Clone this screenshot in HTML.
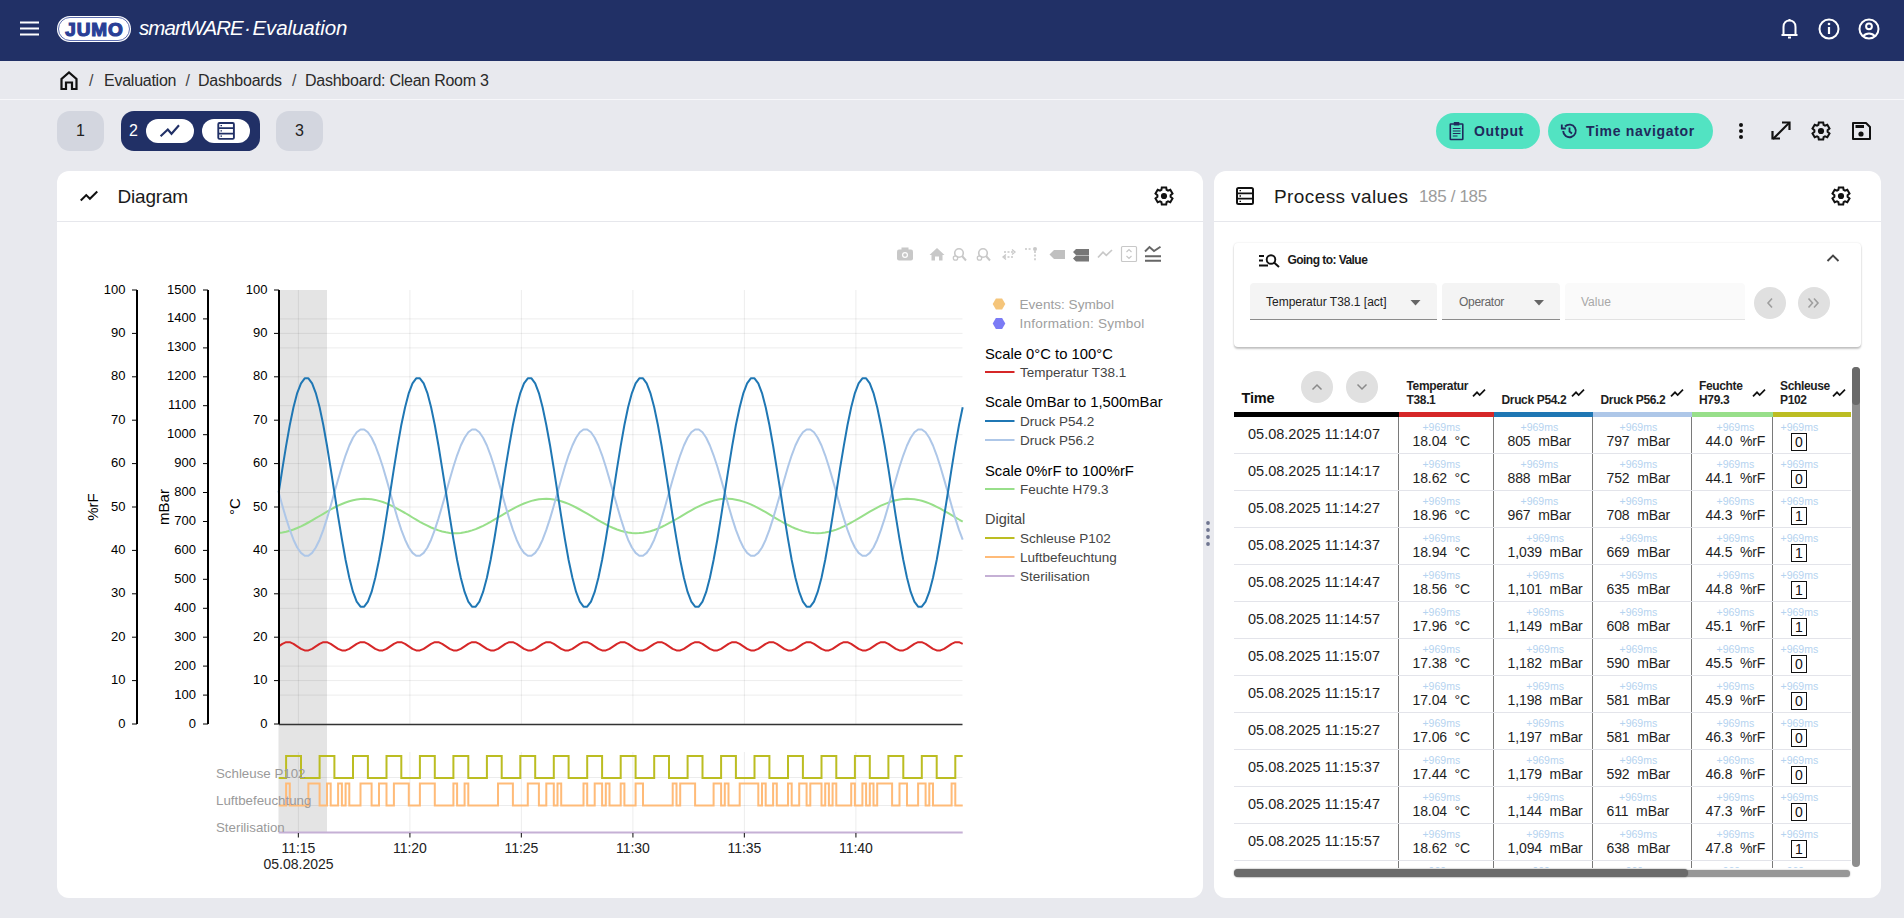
<!DOCTYPE html>
<html><head><meta charset="utf-8"><style>
*{margin:0;padding:0;box-sizing:border-box}
html,body{width:1904px;height:918px;overflow:hidden;background:#e8e9ee;font-family:"Liberation Sans",sans-serif;color:#1a1a1a}
.abs{position:absolute}
.hdr{left:0;top:0;width:1904px;height:61px;background:#213066}
.bc{left:0;top:61px;width:1904px;height:39px;background:#e8e9ee;border-bottom:1.5px solid #f7f7fa}
.crumb{font-size:16px;color:#2a2a2a;letter-spacing:-0.25px;top:72px;white-space:nowrap}
.tab{top:111px;height:40px;border-radius:13px;background:#d3d6df;font-size:16px;color:#222;text-align:center;line-height:40px}
.pill{top:119px;width:48px;height:24px;border-radius:12px;background:#fff}
.btn{top:113px;height:36px;border-radius:18px;background:#52e3c2;color:#1f2a5c;font-weight:bold;font-size:14px;letter-spacing:0.68px;line-height:36px;white-space:nowrap}
.card{background:#fff;border-radius:12px;top:171px;height:727px}
.ctitle{font-size:19px;color:#1a1a1a;top:186px;letter-spacing:-0.2px;white-space:nowrap}
.hline{height:1px;background:#e6e7ec;top:221px}
.tm{font-size:14.5px;color:#1e1e1e;white-space:nowrap;letter-spacing:0px}
.cell{text-align:center;white-space:nowrap}
.ms{font-size:10.5px;color:#b5d3f0;line-height:11px;height:11px}
.val{font-size:14px;color:#1e1e1e;line-height:17px;margin-top:0.8px;letter-spacing:-0.1px}
.box{display:inline-block;border:1.3px solid #111;width:16px;height:18px;font-size:14px;line-height:16px;color:#111;margin-top:-1px}
.rowline{left:1234px;width:617px;height:1px;background:#e3e4ea}
.th{font-size:12px;font-weight:bold;color:#1e1e1e;line-height:14px;letter-spacing:-0.35px;white-space:nowrap}
</style></head><body>
<div class="abs hdr"></div>
<div class="abs" style="left:57px;top:16px;width:74px;height:26px;border-radius:13px;background:#fff;"></div>
<div class="abs" style="left:57.8px;top:16.8px;width:72.4px;height:24.4px;border-radius:12.2px;border:1.1px solid rgba(42,63,150,0.75);"></div>
<div class="abs" style="left:57px;top:16px;width:74px;height:26px;text-align:center;line-height:27.5px;font-size:19px;font-weight:bold;color:#2a3f96;letter-spacing:0.9px;text-indent:0.9px;-webkit-text-stroke:1.2px #2a3f96;">JUMO</div>
<div class="abs" style="left:139px;top:14px;font-size:20.5px;font-style:italic;color:#fff;white-space:nowrap;line-height:28px"><span style="letter-spacing:-0.95px">smartWARE</span><span style="position:absolute;left:105px;top:0">·</span><span style="position:absolute;left:113.5px;top:0;letter-spacing:-0.1px">Evaluation</span></div>
<div class="abs bc"></div>
<div class="abs crumb" style="left:89px;color:#444">/</div>
<div class="abs crumb" style="left:104px">Evaluation</div>
<div class="abs crumb" style="left:185.5px;color:#444">/</div>
<div class="abs crumb" style="left:198px">Dashboards</div>
<div class="abs crumb" style="left:292px;color:#444">/</div>
<div class="abs crumb" style="left:305px">Dashboard: Clean Room 3</div>
<div class="abs tab" style="left:57px;width:47px">1</div>
<div class="abs tab" style="left:121px;width:139px;background:#213066;color:#fff;text-align:left;padding-left:8px">2</div>
<div class="abs pill" style="left:146px"></div>
<div class="abs pill" style="left:202px"></div>
<div class="abs tab" style="left:276px;width:47px">3</div>
<div class="abs btn" style="left:1436px;width:104px;padding-left:38px">Output</div>
<div class="abs btn" style="left:1548px;width:165px;padding-left:38px">Time navigator</div>
<div class="abs card" style="left:57px;width:1146px"></div>
<div class="abs card" style="left:1214px;width:667px"></div>
<div class="abs hline" style="left:57px;width:1146px"></div>
<div class="abs hline" style="left:1214px;width:667px"></div>
<div class="abs ctitle" style="left:117.5px">Diagram</div>
<div class="abs ctitle" style="left:1274px;letter-spacing:0.4px">Process values</div>
<div class="abs" style="left:1419px;top:187px;font-size:17px;color:#9c9c9c;white-space:nowrap;letter-spacing:-0.35px">185 / 185</div>
<div class="abs" style="left:1234px;top:243px;width:627px;height:104px;border-radius:4px;background:#fff;box-shadow:0 2px 2px rgba(0,0,0,0.22),0 0 2px rgba(0,0,0,0.12)"></div>
<div class="abs" style="left:1287.5px;top:252.8px;font-size:12px;font-weight:bold;color:#1a1a1a;letter-spacing:-0.55px;white-space:nowrap">Going to: Value</div>
<div class="abs" style="left:1250px;top:283px;width:187px;height:37px;background:#f4f4f4;border-radius:4px 4px 0 0;border-bottom:1px solid #8c8c8c"></div>
<div class="abs" style="left:1266px;top:295px;font-size:12px;color:#222;letter-spacing:0px;white-space:nowrap">Temperatur T38.1 [act]</div>
<div class="abs" style="left:1442px;top:283px;width:118px;height:37px;background:#f4f4f4;border-radius:4px 4px 0 0;border-bottom:1px solid #8c8c8c"></div>
<div class="abs" style="left:1459px;top:295px;font-size:12px;color:#666;letter-spacing:-0.3px;white-space:nowrap">Operator</div>
<div class="abs" style="left:1565px;top:283px;width:180px;height:37px;background:#fafafa;border-radius:4px 4px 0 0;border-bottom:1px solid #e2e2e2"></div>
<div class="abs" style="left:1581px;top:295px;font-size:12px;color:#a8a8a8;white-space:nowrap">Value</div>
<div class="abs" style="left:1241.5px;top:390px;font-size:14.5px;font-weight:bold;color:#111;letter-spacing:-0.2px">Time</div>
<svg class="abs" style="left:0;top:0" width="1904" height="918"><path d="M20 22.5 H39 M20 28.5 H39 M20 34.5 H39" stroke="#fff" stroke-width="2"/><path d="M782.5 0" fill="none"/><path d="M1781.5 35 H1797.5 M1783.5 35 V27 C1783.5 22.5 1786.5 20.5 1789.5 20.5 C1792.5 20.5 1795.5 22.5 1795.5 27 V35" fill="none" stroke="#fff" stroke-width="2"/><path d="M1788 37.5 H1791" stroke="#fff" stroke-width="2"/><path d="M1789.5 19 V21" stroke="#fff" stroke-width="2"/><circle cx="1829" cy="29" r="9.5" fill="none" stroke="#fff" stroke-width="2"/><path d="M1829 27 V34" stroke="#fff" stroke-width="2.2"/><circle cx="1829" cy="24" r="1.3" fill="#fff"/><circle cx="1869" cy="29" r="9.5" fill="none" stroke="#fff" stroke-width="2"/><circle cx="1869" cy="26.3" r="2.9" fill="none" stroke="#fff" stroke-width="2"/><path d="M1863 36.5 C1865 34 1867 33.6 1869 33.6 C1871 33.6 1873 34 1875 36.5" fill="none" stroke="#fff" stroke-width="2"/><path d="M61.5 89 V79 L69 72.5 L76.5 79 V89 H72 V82.5 H66 V89 Z" fill="none" stroke="#111" stroke-width="2.2" stroke-linejoin="miter"/><circle cx="1741" cy="125" r="2" fill="#111"/><circle cx="1741" cy="131" r="2" fill="#111"/><circle cx="1741" cy="137" r="2" fill="#111"/><path d="M1773 139 L1789 123" stroke="#111" stroke-width="2"/><path d="M1782 122.5 H1789.5 V130" fill="none" stroke="#111" stroke-width="2.2"/><path d="M1772.5 131 V138.5 H1780" fill="none" stroke="#111" stroke-width="2.2"/><polygon points="1818.4,124.9 1818.8,122.4 1823.2,122.4 1823.6,124.9 1825,125.7 1827.3,124.8 1829.5,128.6 1827.6,130.2 1827.6,131.8 1829.5,133.4 1827.3,137.2 1825,136.3 1823.6,137.1 1823.2,139.6 1818.8,139.6 1818.4,137.1 1817,136.3 1814.7,137.2 1812.5,133.4 1814.4,131.8 1814.4,130.2 1812.5,128.6 1814.7,124.8 1817,125.7" fill="none" stroke="#111" stroke-width="2" stroke-linejoin="miter"/><circle cx="1821" cy="131" r="3.1" fill="#111"/><path d="M1853 123 H1866 L1870 127 V139 H1853 Z" fill="none" stroke="#111" stroke-width="2" stroke-linejoin="round"/><rect x="1855.5" y="125" width="8.5" height="3" fill="#111"/><circle cx="1861" cy="134" r="2.6" fill="#111"/><polygon points="1161.4,189.9 1161.8,187.4 1166.2,187.4 1166.6,189.9 1168,190.7 1170.3,189.8 1172.5,193.6 1170.6,195.2 1170.6,196.8 1172.5,198.4 1170.3,202.2 1168,201.3 1166.6,202.1 1166.2,204.6 1161.8,204.6 1161.4,202.1 1160,201.3 1157.7,202.2 1155.5,198.4 1157.4,196.8 1157.4,195.2 1155.5,193.6 1157.7,189.8 1160,190.7" fill="none" stroke="#111" stroke-width="2" stroke-linejoin="miter"/><circle cx="1164" cy="196" r="3.1" fill="#111"/><polygon points="1838.4,189.9 1838.8,187.4 1843.2,187.4 1843.6,189.9 1845,190.7 1847.3,189.8 1849.5,193.6 1847.6,195.2 1847.6,196.8 1849.5,198.4 1847.3,202.2 1845,201.3 1843.6,202.1 1843.2,204.6 1838.8,204.6 1838.4,202.1 1837,201.3 1834.7,202.2 1832.5,198.4 1834.4,196.8 1834.4,195.2 1832.5,193.6 1834.7,189.8 1837,190.7" fill="none" stroke="#111" stroke-width="2" stroke-linejoin="miter"/><circle cx="1841" cy="196" r="3.1" fill="#111"/><circle cx="1208" cy="523" r="1.9" fill="#6f7590"/><circle cx="1208" cy="530" r="1.9" fill="#6f7590"/><circle cx="1208" cy="537" r="1.9" fill="#6f7590"/><circle cx="1208" cy="544" r="1.9" fill="#6f7590"/><path d="M1259 256 H1264 M1259 260.5 H1263 M1259 265.5 H1268" stroke="#111" stroke-width="1.8"/><circle cx="1271" cy="259.5" r="4.3" fill="none" stroke="#111" stroke-width="1.9"/><path d="M1274 262.5 L1279 267" stroke="#111" stroke-width="2"/><path d="M1827.5 261 L1833 255.5 L1838.5 261" fill="none" stroke="#444" stroke-width="1.9"/><path d="M1410.5 300 H1420.5 L1415.5 305.5 Z" fill="#666"/><path d="M1534 300 H1544 L1539 305.5 Z" fill="#666"/><circle cx="1770" cy="303" r="16" fill="#e0e0e0"/><circle cx="1814" cy="303" r="16" fill="#e0e0e0"/><path d="M1772 298.5 L1768 303 L1772 307.5" fill="none" stroke="#9e9e9e" stroke-width="1.6"/><path d="M1808.5 298.5 L1812.5 303 L1808.5 307.5 M1814 298.5 L1818 303 L1814 307.5" fill="none" stroke="#9e9e9e" stroke-width="1.6"/><circle cx="1317" cy="387" r="16" fill="#e0e0e0"/><circle cx="1362" cy="387" r="16" fill="#e0e0e0"/><path d="M1312.5 389.5 L1317 385 L1321.5 389.5" fill="none" stroke="#8a8a8a" stroke-width="1.5"/><path d="M1357.5 384.5 L1362 389 L1366.5 384.5" fill="none" stroke="#8a8a8a" stroke-width="1.5"/><rect x="897" y="249.5" width="16" height="11" rx="2" fill="#c8c8c8"/><rect x="901.5" y="247.5" width="7" height="3" fill="#c8c8c8"/><circle cx="905" cy="255" r="3" fill="#fff"/><circle cx="905" cy="255" r="1.8" fill="#c8c8c8"/><path d="M929.5 255 L937 248 L944.5 255 H942.5 V260.5 H939 V256.5 H935 V260.5 H931.5 V255 Z" fill="#c8c8c8"/><circle cx="959" cy="253" r="4.3" fill="none" stroke="#c8c8c8" stroke-width="1.6"/><path d="M962 256 L966 260.5" stroke="#c8c8c8" stroke-width="2"/><circle cx="955.5" cy="258" r="2.2" fill="none" stroke="#c8c8c8" stroke-width="1.3"/><circle cx="983" cy="253" r="4.3" fill="none" stroke="#c8c8c8" stroke-width="1.6"/><path d="M986 256 L990 260.5" stroke="#c8c8c8" stroke-width="2"/><circle cx="979.5" cy="258" r="2.2" fill="none" stroke="#c8c8c8" stroke-width="1.3"/><path d="M1004 252 H1014 M1004 257 H1014" stroke="#c8c8c8" stroke-width="1.4" stroke-dasharray="2 1.5"/><path d="M1012 249.5 L1015 252 L1012 254.5 M1006 254.5 L1003 257 L1006 259.5" fill="none" stroke="#c8c8c8" stroke-width="1.3"/><path d="M1025 249 H1031 M1035 251 V261" stroke="#c8c8c8" stroke-width="1.6" stroke-dasharray="2 1.6"/><circle cx="1035" cy="249" r="2" fill="#c8c8c8"/><path d="M1049.5 254.5 L1054 250 H1065 V259 H1054 Z" fill="#c0c0c0"/><path d="M1073 252 L1076 249 H1089 V255 H1076 Z M1073 258.5 L1076 255.5 H1089 V261.5 H1076 Z" fill="#777"/><path d="M1098 257.5 L1103 252.2 L1106.3 255.3 L1112 250" fill="none" stroke="#c8c8c8" stroke-width="1.7"/><rect x="1121.5" y="246.5" width="15" height="15" rx="1" fill="none" stroke="#c8c8c8" stroke-width="1.2"/><path d="M1126.5 252 L1129 249.5 L1131.5 252 M1126.5 256 L1129 258.5 L1131.5 256" fill="none" stroke="#c8c8c8" stroke-width="1.2"/><path d="M1145 251.5 L1149.5 247 L1154 251 L1160.5 246.8" fill="none" stroke="#666" stroke-width="1.9"/><path d="M1145 256.3 H1161 M1145 260.8 H1161" stroke="#666" stroke-width="1.9"/></svg>
<svg class="abs" style="left:146px;top:119px" width="48" height="24"><path d="M14.6 17.3 L21.8 10.6 L25.5 14.8 L33 6.3" fill="none" stroke="#213066" stroke-width="2.1"/></svg>
<svg class="abs" style="left:202px;top:119px" width="48" height="24"><rect x="16.3" y="4" width="15.6" height="15.9" rx="1.2" fill="none" stroke="#213066" stroke-width="1.9"/><path d="M16.3 9.1 H31.9 M16.3 14.6 H31.9" stroke="#213066" stroke-width="1.7"/><path d="M18.5 6.6 H20 M18.5 11.9 H20 M18.5 17.2 H20" stroke="#213066" stroke-width="1.3"/></svg>
<svg class="abs" style="left:1449px;top:121px" width="16" height="20" viewBox="0 0 16 20"><rect x="1.3" y="3" width="12.5" height="15.5" rx="0.5" fill="none" stroke="#1f2a5c" stroke-width="1.6"/><rect x="4.8" y="1" width="5.5" height="3.5" fill="#1f2a5c"/><path d="M3.8 7.5 H11.5 M3.8 10 H11.5 M3.8 12.5 H11.5 M3.8 15 H8.5" stroke="#1f2a5c" stroke-width="1.1"/></svg>
<svg class="abs" style="left:1560px;top:122px" width="18" height="18" viewBox="0 0 18 18"><path d="M3.2 9 A6.3 6.3 0 1 0 5 4.5" fill="none" stroke="#1f2a5c" stroke-width="1.9"/><path d="M1.8 2.5 V6.5 H5.8" fill="none" stroke="#1f2a5c" stroke-width="1.8"/><path d="M9.5 5.5 V9.5 L12 11.5" fill="none" stroke="#1f2a5c" stroke-width="1.8"/></svg>
<svg class="abs" style="left:78px;top:185px" width="22" height="22" viewBox="0 0 24 24"><path d="M3 17 L9 11 L13 15 L21 7" fill="none" stroke="#111" stroke-width="2.2" stroke-linecap="butt" stroke-linejoin="miter"/></svg><svg class="abs" style="left:1236px;top:187px" width="18" height="18" viewBox="0 0 18 18"><rect x="1" y="1" width="16" height="16" rx="1.5" fill="none" stroke="#111" stroke-width="2"/><path d="M1 6.3 H17 M1 11.7 H17" stroke="#111" stroke-width="1.8"/><path d="M3.5 3.6 H5 M3.5 9 H5 M3.5 14.4 H5" stroke="#111" stroke-width="1.4"/></svg><svg class="abs" style="left:0;top:0" width="1904" height="918" font-family='"Liberation Sans", sans-serif'><rect x="278.5" y="290" width="48.5" height="543" fill="#e4e4e4"/><path d="M280 318.9 H962.5 M280 333.4 H962.5 M280 347.9 H962.5 M280 376.8 H962.5 M280 405.7 H962.5 M280 420.2 H962.5 M280 434.7 H962.5 M280 463.6 H962.5 M280 492.5 H962.5 M280 507 H962.5 M280 521.5 H962.5 M280 550.4 H962.5 M280 579.3 H962.5 M280 593.8 H962.5 M280 608.3 H962.5 M280 637.2 H962.5 M280 666.1 H962.5 M280 680.6 H962.5 M280 695.1 H962.5 M298.4 290 V724 M298.4 752 V833 M409.9 290 V724 M409.9 752 V833 M521.4 290 V724 M521.4 752 V833 M632.9 290 V724 M632.9 752 V833 M744.4 290 V724 M744.4 752 V833 M855.9 290 V724 M855.9 752 V833 M280 777.5 H962.5 M280 805.5 H962.5" stroke="rgba(0,0,0,0.075)" stroke-width="1" fill="none"/><polyline points="278.7,646.3 282.4,643.8 286.1,642.2 289.8,642.2 293.5,643.8 297.2,646.3 301,648.8 304.7,650.4 308.4,650.4 312.1,648.8 315.8,646.3 319.6,643.8 323.3,642.2 327,642.2 330.7,643.8 334.4,646.3 338.1,648.8 341.9,650.4 345.6,650.4 349.3,648.8 353,646.3 356.7,643.8 360.5,642.2 364.2,642.2 367.9,643.8 371.6,646.3 375.3,648.8 379,650.4 382.8,650.4 386.5,648.8 390.2,646.3 393.9,643.8 397.6,642.2 401.3,642.2 405.1,643.8 408.8,646.3 412.5,648.8 416.2,650.4 419.9,650.4 423.7,648.8 427.4,646.3 431.1,643.8 434.8,642.2 438.5,642.2 442.2,643.8 446,646.3 449.7,648.8 453.4,650.4 457.1,650.4 460.8,648.8 464.6,646.3 468.3,643.8 472,642.2 475.7,642.2 479.4,643.8 483.1,646.3 486.9,648.8 490.6,650.4 494.3,650.4 498,648.8 501.7,646.3 505.4,643.8 509.2,642.2 512.9,642.2 516.6,643.8 520.3,646.3 524,648.8 527.8,650.4 531.5,650.4 535.2,648.8 538.9,646.3 542.6,643.8 546.3,642.2 550.1,642.2 553.8,643.8 557.5,646.3 561.2,648.8 564.9,650.4 568.6,650.4 572.4,648.8 576.1,646.3 579.8,643.8 583.5,642.2 587.2,642.2 591,643.8 594.7,646.3 598.4,648.8 602.1,650.4 605.8,650.4 609.5,648.8 613.3,646.3 617,643.8 620.7,642.2 624.4,642.2 628.1,643.8 631.9,646.3 635.6,648.8 639.3,650.4 643,650.4 646.7,648.8 650.4,646.3 654.2,643.8 657.9,642.2 661.6,642.2 665.3,643.8 669,646.3 672.7,648.8 676.5,650.4 680.2,650.4 683.9,648.8 687.6,646.3 691.3,643.8 695.1,642.2 698.8,642.2 702.5,643.8 706.2,646.3 709.9,648.8 713.6,650.4 717.4,650.4 721.1,648.8 724.8,646.3 728.5,643.8 732.2,642.2 735.9,642.2 739.7,643.8 743.4,646.3 747.1,648.8 750.8,650.4 754.5,650.4 758.3,648.8 762,646.3 765.7,643.8 769.4,642.2 773.1,642.2 776.8,643.8 780.6,646.3 784.3,648.8 788,650.4 791.7,650.4 795.4,648.8 799.2,646.3 802.9,643.8 806.6,642.2 810.3,642.2 814,643.8 817.7,646.3 821.5,648.8 825.2,650.4 828.9,650.4 832.6,648.8 836.3,646.3 840,643.8 843.8,642.2 847.5,642.2 851.2,643.8 854.9,646.3 858.6,648.8 862.4,650.4 866.1,650.4 869.8,648.8 873.5,646.3 877.2,643.8 880.9,642.2 884.7,642.2 888.4,643.8 892.1,646.3 895.8,648.8 899.5,650.4 903.3,650.4 907,648.8 910.7,646.3 914.4,643.8 918.1,642.2 921.8,642.2 925.6,643.8 929.3,646.3 933,648.8 936.7,650.4 940.4,650.4 944.1,648.8 947.9,646.3 951.6,643.8 955.3,642.2 959,642.2 962.7,643.8" fill="none" stroke="#d62728" stroke-width="2" stroke-linejoin="round"/><polyline points="278.7,533 282.4,532.5 286.1,531.8 289.8,530.8 293.5,529.5 297.2,528 301,526.3 304.7,524.5 308.4,522.5 312.1,520.4 315.8,518.2 319.6,516 323.3,513.8 327,511.6 330.7,509.5 334.4,507.5 338.1,505.7 341.9,504 345.6,502.5 349.3,501.2 353,500.2 356.7,499.5 360.5,499 364.2,498.8 367.9,498.9 371.6,499.3 375.3,499.9 379,500.9 382.8,502 386.5,503.4 390.2,505.1 393.9,506.9 397.6,508.8 401.3,510.9 405.1,513 408.8,515.2 412.5,517.5 416.2,519.7 419.9,521.8 423.7,523.8 427.4,525.7 431.1,527.5 434.8,529 438.5,530.4 442.2,531.5 446,532.3 449.7,532.9 453.4,533.2 457.1,533.2 460.8,532.9 464.6,532.3 468.3,531.5 472,530.4 475.7,529.1 479.4,527.5 483.1,525.8 486.9,523.9 490.6,521.8 494.3,519.7 498,517.5 501.7,515.3 505.4,513.1 509.2,510.9 512.9,508.9 516.6,506.9 520.3,505.1 524,503.5 527.8,502.1 531.5,500.9 535.2,500 538.9,499.3 542.6,498.9 546.3,498.8 550.1,499 553.8,499.5 557.5,500.2 561.2,501.2 564.9,502.5 568.6,503.9 572.4,505.6 576.1,507.5 579.8,509.5 583.5,511.6 587.2,513.7 591,515.9 594.7,518.2 598.4,520.3 602.1,522.4 605.8,524.4 609.5,526.3 613.3,528 617,529.5 620.7,530.7 624.4,531.8 628.1,532.5 631.9,533 635.6,533.2 639.3,533.1 643,532.7 646.7,532.1 650.4,531.2 654.2,530 657.9,528.6 661.6,527 665.3,525.2 669,523.2 672.7,521.2 676.5,519 680.2,516.8 683.9,514.6 687.6,512.4 691.3,510.3 695.1,508.2 698.8,506.3 702.5,504.6 706.2,503 709.9,501.7 713.6,500.6 717.4,499.7 721.1,499.1 724.8,498.8 728.5,498.8 732.2,499.1 735.9,499.7 739.7,500.5 743.4,501.6 747.1,502.9 750.8,504.4 754.5,506.2 758.3,508.1 762,510.1 765.7,512.2 769.4,514.4 773.1,516.6 776.8,518.8 780.6,521 784.3,523.1 788,525 791.7,526.9 795.4,528.5 799.2,529.9 802.9,531.1 806.6,532 810.3,532.7 814,533.1 817.7,533.2 821.5,533 825.2,532.6 828.9,531.8 832.6,530.8 836.3,529.6 840,528.1 843.8,526.4 847.5,524.6 851.2,522.6 854.9,520.5 858.6,518.3 862.4,516.1 866.1,513.9 869.8,511.7 873.5,509.6 877.2,507.6 880.9,505.7 884.7,504.1 888.4,502.6 892.1,501.3 895.8,500.3 899.5,499.5 903.3,499 907,498.8 910.7,498.9 914.4,499.2 918.1,499.9 921.8,500.8 925.6,502 929.3,503.4 933,505 936.7,506.8 940.4,508.7 944.1,510.8 947.9,512.9 951.6,515.1 955.3,517.3 959,519.5 962.7,521.7" fill="none" stroke="#98df8a" stroke-width="2" stroke-linejoin="round"/><polyline points="278.7,492.6 282.4,505.8 286.1,518.4 289.8,529.9 293.5,539.7 297.2,547.5 301,552.9 304.7,555.7 308.4,555.7 312.1,552.9 315.8,547.5 319.6,539.7 323.3,529.9 327,518.4 330.7,505.8 334.4,492.6 338.1,479.4 341.9,466.8 345.6,455.3 349.3,445.5 353,437.7 356.7,432.3 360.5,429.5 364.2,429.5 367.9,432.3 371.6,437.7 375.3,445.5 379,455.3 382.8,466.8 386.5,479.4 390.2,492.6 393.9,505.8 397.6,518.4 401.3,529.9 405.1,539.7 408.8,547.5 412.5,552.9 416.2,555.7 419.9,555.7 423.7,552.9 427.4,547.5 431.1,539.7 434.8,529.9 438.5,518.4 442.2,505.8 446,492.6 449.7,479.4 453.4,466.8 457.1,455.3 460.8,445.5 464.6,437.7 468.3,432.3 472,429.5 475.7,429.5 479.4,432.3 483.1,437.7 486.9,445.5 490.6,455.3 494.3,466.8 498,479.4 501.7,492.6 505.4,505.8 509.2,518.4 512.9,529.9 516.6,539.7 520.3,547.5 524,552.9 527.8,555.7 531.5,555.7 535.2,552.9 538.9,547.5 542.6,539.7 546.3,529.9 550.1,518.4 553.8,505.8 557.5,492.6 561.2,479.4 564.9,466.8 568.6,455.3 572.4,445.5 576.1,437.7 579.8,432.3 583.5,429.5 587.2,429.5 591,432.3 594.7,437.7 598.4,445.5 602.1,455.3 605.8,466.8 609.5,479.4 613.3,492.6 617,505.8 620.7,518.4 624.4,529.9 628.1,539.7 631.9,547.5 635.6,552.9 639.3,555.7 643,555.7 646.7,552.9 650.4,547.5 654.2,539.7 657.9,529.9 661.6,518.4 665.3,505.8 669,492.6 672.7,479.4 676.5,466.8 680.2,455.3 683.9,445.5 687.6,437.7 691.3,432.3 695.1,429.5 698.8,429.5 702.5,432.3 706.2,437.7 709.9,445.5 713.6,455.3 717.4,466.8 721.1,479.4 724.8,492.6 728.5,505.8 732.2,518.4 735.9,529.9 739.7,539.7 743.4,547.5 747.1,552.9 750.8,555.7 754.5,555.7 758.3,552.9 762,547.5 765.7,539.7 769.4,529.9 773.1,518.4 776.8,505.8 780.6,492.6 784.3,479.4 788,466.8 791.7,455.3 795.4,445.5 799.2,437.7 802.9,432.3 806.6,429.5 810.3,429.5 814,432.3 817.7,437.7 821.5,445.5 825.2,455.3 828.9,466.8 832.6,479.4 836.3,492.6 840,505.8 843.8,518.4 847.5,529.9 851.2,539.7 854.9,547.5 858.6,552.9 862.4,555.7 866.1,555.7 869.8,552.9 873.5,547.5 877.2,539.7 880.9,529.9 884.7,518.4 888.4,505.8 892.1,492.6 895.8,479.4 899.5,466.8 903.3,455.3 907,445.5 910.7,437.7 914.4,432.3 918.1,429.5 921.8,429.5 925.6,432.3 929.3,437.7 933,445.5 936.7,455.3 940.4,466.8 944.1,479.4 947.9,492.6 951.6,505.8 955.3,518.4 959,529.9 962.7,539.7" fill="none" stroke="#aec7e8" stroke-width="2" stroke-linejoin="round"/><polyline points="278.7,492.5 282.4,468.6 286.1,445.8 289.8,425 293.5,407.2 297.2,393.1 301,383.3 304.7,378.3 308.4,378.3 312.1,383.3 315.8,393.1 319.6,407.2 323.3,425 327,445.8 330.7,468.6 334.4,492.5 338.1,516.4 341.9,539.2 345.6,560 349.3,577.8 353,591.9 356.7,601.7 360.5,606.7 364.2,606.7 367.9,601.7 371.6,591.9 375.3,577.8 379,560 382.8,539.2 386.5,516.4 390.2,492.5 393.9,468.6 397.6,445.8 401.3,425 405.1,407.2 408.8,393.1 412.5,383.3 416.2,378.3 419.9,378.3 423.7,383.3 427.4,393.1 431.1,407.2 434.8,425 438.5,445.8 442.2,468.6 446,492.5 449.7,516.4 453.4,539.2 457.1,560 460.8,577.8 464.6,591.9 468.3,601.7 472,606.7 475.7,606.7 479.4,601.7 483.1,591.9 486.9,577.8 490.6,560 494.3,539.2 498,516.4 501.7,492.5 505.4,468.6 509.2,445.8 512.9,425 516.6,407.2 520.3,393.1 524,383.3 527.8,378.3 531.5,378.3 535.2,383.3 538.9,393.1 542.6,407.2 546.3,425 550.1,445.8 553.8,468.6 557.5,492.5 561.2,516.4 564.9,539.2 568.6,560 572.4,577.8 576.1,591.9 579.8,601.7 583.5,606.7 587.2,606.7 591,601.7 594.7,591.9 598.4,577.8 602.1,560 605.8,539.2 609.5,516.4 613.3,492.5 617,468.6 620.7,445.8 624.4,425 628.1,407.2 631.9,393.1 635.6,383.3 639.3,378.3 643,378.3 646.7,383.3 650.4,393.1 654.2,407.2 657.9,425 661.6,445.8 665.3,468.6 669,492.5 672.7,516.4 676.5,539.2 680.2,560 683.9,577.8 687.6,591.9 691.3,601.7 695.1,606.7 698.8,606.7 702.5,601.7 706.2,591.9 709.9,577.8 713.6,560 717.4,539.2 721.1,516.4 724.8,492.5 728.5,468.6 732.2,445.8 735.9,425 739.7,407.2 743.4,393.1 747.1,383.3 750.8,378.3 754.5,378.3 758.3,383.3 762,393.1 765.7,407.2 769.4,425 773.1,445.8 776.8,468.6 780.6,492.5 784.3,516.4 788,539.2 791.7,560 795.4,577.8 799.2,591.9 802.9,601.7 806.6,606.7 810.3,606.7 814,601.7 817.7,591.9 821.5,577.8 825.2,560 828.9,539.2 832.6,516.4 836.3,492.5 840,468.6 843.8,445.8 847.5,425 851.2,407.2 854.9,393.1 858.6,383.3 862.4,378.3 866.1,378.3 869.8,383.3 873.5,393.1 877.2,407.2 880.9,425 884.7,445.8 888.4,468.6 892.1,492.5 895.8,516.4 899.5,539.2 903.3,560 907,577.8 910.7,591.9 914.4,601.7 918.1,606.7 921.8,606.7 925.6,601.7 929.3,591.9 933,577.8 936.7,560 940.4,539.2 944.1,516.4 947.9,492.5 951.6,468.6 955.3,445.8 959,425 962.7,407.2" fill="none" stroke="#1f77b4" stroke-width="2" stroke-linejoin="round"/><path d="M278.7 778H286.1V756H301V778H319.6V756H334.4V778H353V756H367.9V778H386.5V756H401.3V778H419.9V756H434.8V778H453.4V756H468.3V778H486.9V756H501.7V778H520.3V756H535.2V778H553.8V756H568.6V778H587.2V756H602.1V778H620.7V756H635.6V778H654.2V756H669V778H687.6V756H702.5V778H721.1V756H735.9V778H754.5V756H769.4V778H788V756H802.9V778H821.5V756H836.3V778H854.9V756H869.8V778H888.4V756H903.3V778H921.8V756H936.7V778H955.3V756H962.7" fill="none" stroke="#bcbd22" stroke-width="2"/><path d="M278.7 805.5H286.1V783.5H289.8V805.5H308.4V783.5H319.6V805.5H327V783.5H330.7V805.5H338.1V783.5H341.9V805.5H345.6V783.5H349.3V805.5H360.5V783.5H371.6V805.5H379V783.5H386.5V805.5H393.9V783.5H408.8V805.5H419.9V783.5H434.8V805.5H453.4V783.5H457.1V805.5H464.6V783.5H468.3V805.5H498V783.5H512.9V805.5H527.8V783.5H538.9V805.5H546.3V783.5H553.8V805.5H557.5V783.5H561.2V805.5H583.5V783.5H587.2V805.5H594.7V783.5H602.1V805.5H605.8V783.5H609.5V805.5H620.7V783.5H624.4V805.5H635.6V783.5H643V805.5H672.7V783.5H676.5V805.5H680.2V783.5H695.1V805.5H713.6V783.5H721.1V805.5H724.8V783.5H728.5V805.5H739.7V783.5H758.3V805.5H762V783.5H765.7V805.5H773.1V783.5H776.8V805.5H788V783.5H791.7V805.5H799.2V783.5H806.6V805.5H810.3V783.5H821.5V805.5H825.2V783.5H828.9V805.5H832.6V783.5H836.3V805.5H851.2V783.5H854.9V805.5H862.4V783.5H866.1V805.5H869.8V783.5H873.5V805.5H877.2V783.5H892.1V805.5H899.5V783.5H907V805.5H918.1V783.5H925.6V805.5H929.3V783.5H933V805.5H951.6V783.5H955.3V805.5H962.7" fill="none" stroke="#ffbb78" stroke-width="2"/><path d="M278.66 832.5 H962.7" stroke="#c5b0d5" stroke-width="2"/><path d="M137 290 V724" stroke="#000" stroke-width="2"/><path d="M208 290 V724" stroke="#000" stroke-width="2"/><path d="M279 290 V724" stroke="#000" stroke-width="2"/><path d="M132 724 H137 M274 724 H279 M132 680.6 H137 M274 680.6 H279 M132 637.2 H137 M274 637.2 H279 M132 593.8 H137 M274 593.8 H279 M132 550.4 H137 M274 550.4 H279 M132 507 H137 M274 507 H279 M132 463.6 H137 M274 463.6 H279 M132 420.2 H137 M274 420.2 H279 M132 376.8 H137 M274 376.8 H279 M132 333.4 H137 M274 333.4 H279 M132 290 H137 M274 290 H279 M203 724 H208 M203 695.1 H208 M203 666.1 H208 M203 637.2 H208 M203 608.3 H208 M203 579.3 H208 M203 550.4 H208 M203 521.5 H208 M203 492.5 H208 M203 463.6 H208 M203 434.7 H208 M203 405.7 H208 M203 376.8 H208 M203 347.9 H208 M203 318.9 H208 M203 290 H208" stroke="#000" stroke-width="1"/><path d="M279 724.5 H962.5" stroke="#333" stroke-width="1.3"/><path d="M298.4 833 V837.5 M409.9 833 V837.5 M521.4 833 V837.5 M632.9 833 V837.5 M744.4 833 V837.5 M855.9 833 V837.5" stroke="#333" stroke-width="1.2"/><g font-size="13" fill="#000"><text x="125.5" y="727.5" text-anchor="end">0</text><text x="267.5" y="727.5" text-anchor="end">0</text><text x="125.5" y="684.1" text-anchor="end">10</text><text x="267.5" y="684.1" text-anchor="end">10</text><text x="125.5" y="640.7" text-anchor="end">20</text><text x="267.5" y="640.7" text-anchor="end">20</text><text x="125.5" y="597.3" text-anchor="end">30</text><text x="267.5" y="597.3" text-anchor="end">30</text><text x="125.5" y="553.9" text-anchor="end">40</text><text x="267.5" y="553.9" text-anchor="end">40</text><text x="125.5" y="510.5" text-anchor="end">50</text><text x="267.5" y="510.5" text-anchor="end">50</text><text x="125.5" y="467.1" text-anchor="end">60</text><text x="267.5" y="467.1" text-anchor="end">60</text><text x="125.5" y="423.7" text-anchor="end">70</text><text x="267.5" y="423.7" text-anchor="end">70</text><text x="125.5" y="380.3" text-anchor="end">80</text><text x="267.5" y="380.3" text-anchor="end">80</text><text x="125.5" y="336.9" text-anchor="end">90</text><text x="267.5" y="336.9" text-anchor="end">90</text><text x="125.5" y="293.5" text-anchor="end">100</text><text x="267.5" y="293.5" text-anchor="end">100</text><text x="196" y="727.5" text-anchor="end">0</text><text x="196" y="698.6" text-anchor="end">100</text><text x="196" y="669.6" text-anchor="end">200</text><text x="196" y="640.7" text-anchor="end">300</text><text x="196" y="611.8" text-anchor="end">400</text><text x="196" y="582.8" text-anchor="end">500</text><text x="196" y="553.9" text-anchor="end">600</text><text x="196" y="525" text-anchor="end">700</text><text x="196" y="496" text-anchor="end">800</text><text x="196" y="467.1" text-anchor="end">900</text><text x="196" y="438.2" text-anchor="end">1000</text><text x="196" y="409.2" text-anchor="end">1100</text><text x="196" y="380.3" text-anchor="end">1200</text><text x="196" y="351.4" text-anchor="end">1300</text><text x="196" y="322.4" text-anchor="end">1400</text><text x="196" y="293.5" text-anchor="end">1500</text></g><g font-size="15" fill="#000" text-anchor="middle"><text transform="translate(98 507) rotate(-90)">%rF</text><text transform="translate(169 507) rotate(-90)">mBar</text><text transform="translate(240 506.5) rotate(-90)">°C</text></g><g font-size="14" fill="#222" text-anchor="middle"><text x="298.4" y="852.5">11:15</text><text x="409.9" y="852.5">11:20</text><text x="521.4" y="852.5">11:25</text><text x="632.9" y="852.5">11:30</text><text x="744.4" y="852.5">11:35</text><text x="855.9" y="852.5">11:40</text><text x="298.6" y="868.5">05.08.2025</text></g><g font-size="13.3" fill="#9a9a9a"><text x="216" y="777.5">Schleuse P102</text><text x="216" y="804.5">Luftbefeuchtung</text><text x="216" y="831.5">Sterilisation</text></g><polygon points="1005.3,304 1002.1,309.5 995.9,309.5 992.7,304 995.9,298.5 1002.1,298.5" fill="#f5c57a"/><polygon points="1005.3,323.5 1002.1,329 995.9,329 992.7,323.5 995.9,318 1002.1,318" fill="#7b7bf5"/><g font-size="13.6" fill="#a0a0a0"><text x="1019.5" y="309">Events: Symbol</text><text x="1019.5" y="327.8" letter-spacing="0.22">Information: Symbol</text></g><g font-size="14.8" fill="#000"><text x="985" y="358.5">Scale 0°C to 100°C</text><text x="985" y="407.4">Scale 0mBar to 1,500mBar</text><text x="985" y="475.6">Scale 0%rF to 100%rF</text></g><text x="985" y="524" font-size="14.5" fill="#444">Digital</text><path d="M985 372 H1014.5" stroke="#d62728" stroke-width="2"/><text x="1020" y="377" font-size="13.5" fill="#444">Temperatur T38.1</text><path d="M985 421 H1014.5" stroke="#1f77b4" stroke-width="2"/><text x="1020" y="426" font-size="13.5" fill="#444">Druck P54.2</text><path d="M985 440 H1014.5" stroke="#aec7e8" stroke-width="2"/><text x="1020" y="445" font-size="13.5" fill="#444">Druck P56.2</text><path d="M985 489 H1014.5" stroke="#98df8a" stroke-width="2"/><text x="1020" y="494" font-size="13.5" fill="#444">Feuchte H79.3</text><path d="M985 538 H1014.5" stroke="#bcbd22" stroke-width="2"/><text x="1020" y="543" font-size="13.5" fill="#444">Schleuse P102</text><path d="M985 557 H1014.5" stroke="#ffbb78" stroke-width="2"/><text x="1020" y="562" font-size="13.5" fill="#444">Luftbefeuchtung</text><path d="M985 576 H1014.5" stroke="#c5b0d5" stroke-width="2"/><text x="1020" y="581" font-size="13.5" fill="#444">Sterilisation</text></svg><div class="abs" style="left:1234px;top:367px;width:617px;height:501px;overflow:hidden"><div style="position:absolute;left:-1234px;top:-367px;width:1904px;height:918px"><div class="abs" style="left:1234px;top:412px;width:164.5px;height:5px;background:#000"></div><div class="abs" style="left:1398.5px;top:412px;width:95px;height:5px;background:#d62728"></div><div class="abs" style="left:1493.5px;top:412px;width:99px;height:5px;background:#1f77b4"></div><div class="abs" style="left:1592.5px;top:412px;width:99px;height:5px;background:#aec7e8"></div><div class="abs" style="left:1691.5px;top:412px;width:81px;height:5px;background:#98df8a"></div><div class="abs" style="left:1772.5px;top:412px;width:78.5px;height:5px;background:#bcbd22"></div><div class="abs" style="left:1398px;top:417px;width:1px;height:451px;background:#7a7a7a"></div><div class="abs" style="left:1493px;top:417px;width:1px;height:451px;background:#7a7a7a"></div><div class="abs" style="left:1592px;top:417px;width:1px;height:451px;background:#7a7a7a"></div><div class="abs" style="left:1691px;top:417px;width:1px;height:451px;background:#7a7a7a"></div><div class="abs" style="left:1772px;top:417px;width:1px;height:451px;background:#7a7a7a"></div><div class="abs th" style="left:1406.5px;top:379px">Temperatur<br>T38.1</div><svg class="abs" style="left:1470.5px;top:384.5px" width="16" height="16" viewBox="0 0 24 24"><path d="M3 17 L9 11 L13 15 L21 7" fill="none" stroke="#111" stroke-width="2.6" stroke-linecap="butt" stroke-linejoin="miter"/></svg><div class="abs th" style="left:1501.5px;top:379px"><br>Druck P54.2</div><svg class="abs" style="left:1569.5px;top:384.5px" width="16" height="16" viewBox="0 0 24 24"><path d="M3 17 L9 11 L13 15 L21 7" fill="none" stroke="#111" stroke-width="2.6" stroke-linecap="butt" stroke-linejoin="miter"/></svg><div class="abs th" style="left:1600.5px;top:379px"><br>Druck P56.2</div><svg class="abs" style="left:1668.5px;top:384.5px" width="16" height="16" viewBox="0 0 24 24"><path d="M3 17 L9 11 L13 15 L21 7" fill="none" stroke="#111" stroke-width="2.6" stroke-linecap="butt" stroke-linejoin="miter"/></svg><div class="abs th" style="left:1699px;top:379px">Feuchte<br>H79.3</div><svg class="abs" style="left:1750.5px;top:384.5px" width="16" height="16" viewBox="0 0 24 24"><path d="M3 17 L9 11 L13 15 L21 7" fill="none" stroke="#111" stroke-width="2.6" stroke-linecap="butt" stroke-linejoin="miter"/></svg><div class="abs th" style="left:1780px;top:379px">Schleuse<br>P102</div><svg class="abs" style="left:1831.0px;top:384.5px" width="16" height="16" viewBox="0 0 24 24"><path d="M3 17 L9 11 L13 15 L21 7" fill="none" stroke="#111" stroke-width="2.6" stroke-linecap="butt" stroke-linejoin="miter"/></svg><div class="abs tm" style="left:1248px;top:426px">05.08.2025 11:14:07</div><div class="abs cell" style="left:1412.5px;top:421.5px"><div class="ms">+969ms</div><div class="val">18.04&nbsp; °C</div></div><div class="abs cell" style="left:1507.5px;top:421.5px"><div class="ms">+969ms</div><div class="val">805&nbsp; mBar</div></div><div class="abs cell" style="left:1606.5px;top:421.5px"><div class="ms">+969ms</div><div class="val">797&nbsp; mBar</div></div><div class="abs cell" style="left:1705.5px;top:421.5px"><div class="ms">+969ms</div><div class="val">44.0&nbsp; %rF</div></div><div class="abs cell" style="left:1780.5px;top:421.5px;width:37px"><div class="ms">+969ms</div><div class="box">0</div></div><div class="abs rowline" style="top:453px"></div><div class="abs tm" style="left:1248px;top:463px">05.08.2025 11:14:17</div><div class="abs cell" style="left:1412.5px;top:458.5px"><div class="ms">+969ms</div><div class="val">18.62&nbsp; °C</div></div><div class="abs cell" style="left:1507.5px;top:458.5px"><div class="ms">+969ms</div><div class="val">888&nbsp; mBar</div></div><div class="abs cell" style="left:1606.5px;top:458.5px"><div class="ms">+969ms</div><div class="val">752&nbsp; mBar</div></div><div class="abs cell" style="left:1705.5px;top:458.5px"><div class="ms">+969ms</div><div class="val">44.1&nbsp; %rF</div></div><div class="abs cell" style="left:1780.5px;top:458.5px;width:37px"><div class="ms">+969ms</div><div class="box">0</div></div><div class="abs rowline" style="top:490px"></div><div class="abs tm" style="left:1248px;top:500px">05.08.2025 11:14:27</div><div class="abs cell" style="left:1412.5px;top:495.5px"><div class="ms">+969ms</div><div class="val">18.96&nbsp; °C</div></div><div class="abs cell" style="left:1507.5px;top:495.5px"><div class="ms">+969ms</div><div class="val">967&nbsp; mBar</div></div><div class="abs cell" style="left:1606.5px;top:495.5px"><div class="ms">+969ms</div><div class="val">708&nbsp; mBar</div></div><div class="abs cell" style="left:1705.5px;top:495.5px"><div class="ms">+969ms</div><div class="val">44.3&nbsp; %rF</div></div><div class="abs cell" style="left:1780.5px;top:495.5px;width:37px"><div class="ms">+969ms</div><div class="box">1</div></div><div class="abs rowline" style="top:527px"></div><div class="abs tm" style="left:1248px;top:537px">05.08.2025 11:14:37</div><div class="abs cell" style="left:1412.5px;top:532.5px"><div class="ms">+969ms</div><div class="val">18.94&nbsp; °C</div></div><div class="abs cell" style="left:1507.5px;top:532.5px"><div class="ms">+969ms</div><div class="val">1,039&nbsp; mBar</div></div><div class="abs cell" style="left:1606.5px;top:532.5px"><div class="ms">+969ms</div><div class="val">669&nbsp; mBar</div></div><div class="abs cell" style="left:1705.5px;top:532.5px"><div class="ms">+969ms</div><div class="val">44.5&nbsp; %rF</div></div><div class="abs cell" style="left:1780.5px;top:532.5px;width:37px"><div class="ms">+969ms</div><div class="box">1</div></div><div class="abs rowline" style="top:564px"></div><div class="abs tm" style="left:1248px;top:574px">05.08.2025 11:14:47</div><div class="abs cell" style="left:1412.5px;top:569.5px"><div class="ms">+969ms</div><div class="val">18.56&nbsp; °C</div></div><div class="abs cell" style="left:1507.5px;top:569.5px"><div class="ms">+969ms</div><div class="val">1,101&nbsp; mBar</div></div><div class="abs cell" style="left:1606.5px;top:569.5px"><div class="ms">+969ms</div><div class="val">635&nbsp; mBar</div></div><div class="abs cell" style="left:1705.5px;top:569.5px"><div class="ms">+969ms</div><div class="val">44.8&nbsp; %rF</div></div><div class="abs cell" style="left:1780.5px;top:569.5px;width:37px"><div class="ms">+969ms</div><div class="box">1</div></div><div class="abs rowline" style="top:601px"></div><div class="abs tm" style="left:1248px;top:611px">05.08.2025 11:14:57</div><div class="abs cell" style="left:1412.5px;top:606.5px"><div class="ms">+969ms</div><div class="val">17.96&nbsp; °C</div></div><div class="abs cell" style="left:1507.5px;top:606.5px"><div class="ms">+969ms</div><div class="val">1,149&nbsp; mBar</div></div><div class="abs cell" style="left:1606.5px;top:606.5px"><div class="ms">+969ms</div><div class="val">608&nbsp; mBar</div></div><div class="abs cell" style="left:1705.5px;top:606.5px"><div class="ms">+969ms</div><div class="val">45.1&nbsp; %rF</div></div><div class="abs cell" style="left:1780.5px;top:606.5px;width:37px"><div class="ms">+969ms</div><div class="box">1</div></div><div class="abs rowline" style="top:638px"></div><div class="abs tm" style="left:1248px;top:648px">05.08.2025 11:15:07</div><div class="abs cell" style="left:1412.5px;top:643.5px"><div class="ms">+969ms</div><div class="val">17.38&nbsp; °C</div></div><div class="abs cell" style="left:1507.5px;top:643.5px"><div class="ms">+969ms</div><div class="val">1,182&nbsp; mBar</div></div><div class="abs cell" style="left:1606.5px;top:643.5px"><div class="ms">+969ms</div><div class="val">590&nbsp; mBar</div></div><div class="abs cell" style="left:1705.5px;top:643.5px"><div class="ms">+969ms</div><div class="val">45.5&nbsp; %rF</div></div><div class="abs cell" style="left:1780.5px;top:643.5px;width:37px"><div class="ms">+969ms</div><div class="box">0</div></div><div class="abs rowline" style="top:675px"></div><div class="abs tm" style="left:1248px;top:685px">05.08.2025 11:15:17</div><div class="abs cell" style="left:1412.5px;top:680.5px"><div class="ms">+969ms</div><div class="val">17.04&nbsp; °C</div></div><div class="abs cell" style="left:1507.5px;top:680.5px"><div class="ms">+969ms</div><div class="val">1,198&nbsp; mBar</div></div><div class="abs cell" style="left:1606.5px;top:680.5px"><div class="ms">+969ms</div><div class="val">581&nbsp; mBar</div></div><div class="abs cell" style="left:1705.5px;top:680.5px"><div class="ms">+969ms</div><div class="val">45.9&nbsp; %rF</div></div><div class="abs cell" style="left:1780.5px;top:680.5px;width:37px"><div class="ms">+969ms</div><div class="box">0</div></div><div class="abs rowline" style="top:712px"></div><div class="abs tm" style="left:1248px;top:722px">05.08.2025 11:15:27</div><div class="abs cell" style="left:1412.5px;top:717.5px"><div class="ms">+969ms</div><div class="val">17.06&nbsp; °C</div></div><div class="abs cell" style="left:1507.5px;top:717.5px"><div class="ms">+969ms</div><div class="val">1,197&nbsp; mBar</div></div><div class="abs cell" style="left:1606.5px;top:717.5px"><div class="ms">+969ms</div><div class="val">581&nbsp; mBar</div></div><div class="abs cell" style="left:1705.5px;top:717.5px"><div class="ms">+969ms</div><div class="val">46.3&nbsp; %rF</div></div><div class="abs cell" style="left:1780.5px;top:717.5px;width:37px"><div class="ms">+969ms</div><div class="box">0</div></div><div class="abs rowline" style="top:749px"></div><div class="abs tm" style="left:1248px;top:759px">05.08.2025 11:15:37</div><div class="abs cell" style="left:1412.5px;top:754.5px"><div class="ms">+969ms</div><div class="val">17.44&nbsp; °C</div></div><div class="abs cell" style="left:1507.5px;top:754.5px"><div class="ms">+969ms</div><div class="val">1,179&nbsp; mBar</div></div><div class="abs cell" style="left:1606.5px;top:754.5px"><div class="ms">+969ms</div><div class="val">592&nbsp; mBar</div></div><div class="abs cell" style="left:1705.5px;top:754.5px"><div class="ms">+969ms</div><div class="val">46.8&nbsp; %rF</div></div><div class="abs cell" style="left:1780.5px;top:754.5px;width:37px"><div class="ms">+969ms</div><div class="box">0</div></div><div class="abs rowline" style="top:786px"></div><div class="abs tm" style="left:1248px;top:796px">05.08.2025 11:15:47</div><div class="abs cell" style="left:1412.5px;top:791.5px"><div class="ms">+969ms</div><div class="val">18.04&nbsp; °C</div></div><div class="abs cell" style="left:1507.5px;top:791.5px"><div class="ms">+969ms</div><div class="val">1,144&nbsp; mBar</div></div><div class="abs cell" style="left:1606.5px;top:791.5px"><div class="ms">+969ms</div><div class="val">611&nbsp; mBar</div></div><div class="abs cell" style="left:1705.5px;top:791.5px"><div class="ms">+969ms</div><div class="val">47.3&nbsp; %rF</div></div><div class="abs cell" style="left:1780.5px;top:791.5px;width:37px"><div class="ms">+969ms</div><div class="box">0</div></div><div class="abs rowline" style="top:823px"></div><div class="abs tm" style="left:1248px;top:833px">05.08.2025 11:15:57</div><div class="abs cell" style="left:1412.5px;top:828.5px"><div class="ms">+969ms</div><div class="val">18.62&nbsp; °C</div></div><div class="abs cell" style="left:1507.5px;top:828.5px"><div class="ms">+969ms</div><div class="val">1,094&nbsp; mBar</div></div><div class="abs cell" style="left:1606.5px;top:828.5px"><div class="ms">+969ms</div><div class="val">638&nbsp; mBar</div></div><div class="abs cell" style="left:1705.5px;top:828.5px"><div class="ms">+969ms</div><div class="val">47.8&nbsp; %rF</div></div><div class="abs cell" style="left:1780.5px;top:828.5px;width:37px"><div class="ms">+969ms</div><div class="box">1</div></div><div class="abs rowline" style="top:860px"></div><div class="abs tm" style="left:1248px;top:870px">05.08.2025 11:16:07</div><div class="abs cell" style="left:1412.5px;top:865.5px"><div class="ms">+969ms</div><div class="val">19.12&nbsp; °C</div></div><div class="abs cell" style="left:1507.5px;top:865.5px"><div class="ms">+969ms</div><div class="val">1,029&nbsp; mBar</div></div><div class="abs cell" style="left:1606.5px;top:865.5px"><div class="ms">+969ms</div><div class="val">675&nbsp; mBar</div></div><div class="abs cell" style="left:1705.5px;top:865.5px"><div class="ms">+969ms</div><div class="val">48.3&nbsp; %rF</div></div><div class="abs cell" style="left:1780.5px;top:865.5px;width:37px"><div class="ms">+969ms</div><div class="box">1</div></div><div class="abs rowline" style="top:897px"></div></div></div>
<div class="abs" style="left:1852px;top:367px;width:8px;height:500px;border-radius:4px;background:#8e8e8e"></div>
<div class="abs" style="left:1852px;top:367px;width:8px;height:38px;border-radius:4px;background:#6a6a6a"></div>
<div class="abs" style="left:1236px;top:869.5px;width:614px;height:7px;border-radius:3.5px;background:#979797;box-shadow:0 0 1.5px #979797"></div>
<div class="abs" style="left:1234px;top:868.5px;width:454px;height:8.5px;border-radius:4.25px;background:#6b6b6b;box-shadow:0 0 1.5px #6b6b6b"></div>
</body></html>
